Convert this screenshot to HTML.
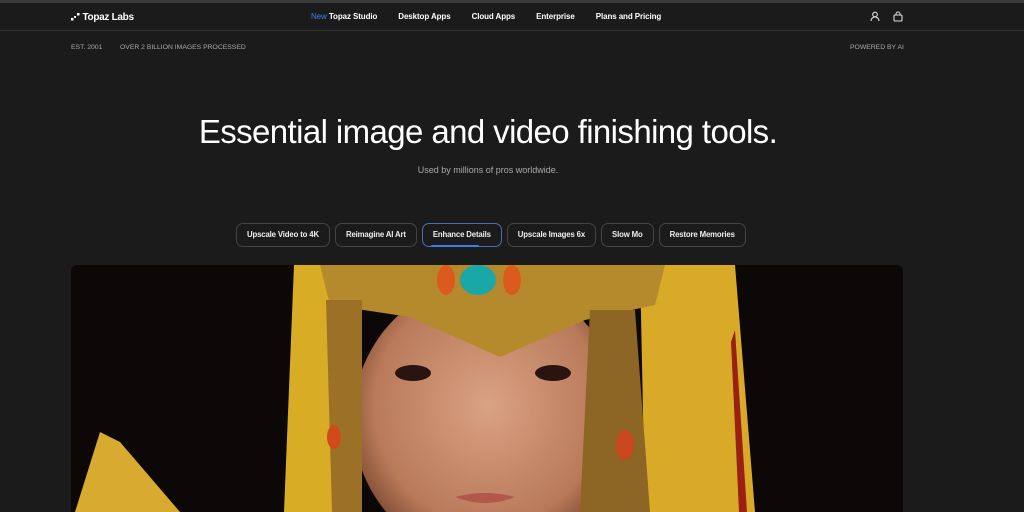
<!DOCTYPE html>
<html><head><meta charset="utf-8"><style>
*{margin:0;padding:0;box-sizing:border-box}
html,body{width:1024px;height:512px;overflow:hidden}
body{background:#1b1b1b;font-family:"Liberation Sans",sans-serif;color:#fff;position:relative}
.top{position:absolute;top:0;left:0;width:1024px;height:3px;background:#3a3a3a}
.nav{position:absolute;top:3px;left:0;width:1024px;height:28px;border-bottom:1px solid #333}
.logo{position:absolute;left:71px;top:9px;font-size:10px;font-weight:bold;letter-spacing:-.3px}
.links{position:absolute;left:311px;top:9px;font-size:8px;font-weight:bold;white-space:nowrap;letter-spacing:-.1px}
.links span{margin-right:21px}
.meta{position:absolute;top:44px;font-size:6.8px;color:#aaa}
h1{position:absolute;top:113px;left:0;width:976px;text-align:center;font-size:33px;font-weight:normal;letter-spacing:-.6px}
.sub{position:absolute;top:165px;left:0;width:976px;text-align:center;font-size:9px;color:#aaa}
.tabs{position:absolute;top:223px;left:236px;display:flex;gap:5px}
.tab{height:24px;border:1px solid #444;border-radius:7px;padding:0 10px;font-size:7.8px;font-weight:bold;line-height:22px;color:#eee;position:relative;letter-spacing:-.15px}
.tab.act{border-color:#4a6fb0}
.tab.act:after{content:"";position:absolute;left:8px;bottom:-1px;width:48px;height:2px;background:#3c7cf0;border-radius:1px}
.img{position:absolute;left:71px;top:265px;width:832px;height:247px;border-radius:6px 6px 0 0;overflow:hidden;background:#0c0807}
</style></head><body>
<div class="top"></div>
<div class="nav">
<div class="logo"><svg width="9" height="8" viewBox="0 0 9 8" style="vertical-align:-1px"><rect x="0" y="5" width="2.5" height="2.5" fill="#fff"/><rect x="3" y="3" width="2" height="2" fill="#fff"/><rect x="6" y="0" width="2.5" height="2.5" fill="#fff"/></svg> Topaz Labs</div>
<div class="links"><span><b style="color:#3b7ff0;font-weight:normal">New</b> Topaz Studio</span><span>Desktop Apps</span><span>Cloud Apps</span><span>Enterprise</span><span>Plans and Pricing</span></div>
<svg style="position:absolute;left:870px;top:8px" width="10" height="11" viewBox="0 0 10 11" fill="none" stroke="#ddd" stroke-width="1.1"><circle cx="5" cy="3.5" r="2.3"/><path d="M1 10c0-2.5 2-4 4-4s4 1.5 4 4"/></svg>
<svg style="position:absolute;left:893px;top:8px" width="10" height="11" viewBox="0 0 10 11" fill="none" stroke="#ddd" stroke-width="1.1"><rect x="1" y="4" width="8" height="6" rx="1"/><path d="M3 4V3a2 2 0 0 1 4 0v1"/></svg>
</div>
<div class="meta" style="left:71px">EST. 2001</div>
<div class="meta" style="left:120px">OVER 2 BILLION IMAGES PROCESSED</div>
<div class="meta" style="left:850px">POWERED BY AI</div>
<h1>Essential image and video finishing tools.</h1>
<div class="sub">Used by millions of pros worldwide.</div>
<div class="tabs">
<div class="tab">Upscale Video to 4K</div><div class="tab">Reimagine AI Art</div><div class="tab act">Enhance Details</div><div class="tab">Upscale Images 6x</div><div class="tab">Slow Mo</div><div class="tab">Restore Memories</div>
</div>
<div class="img"><svg width="832" height="247" viewBox="71 265 832 247">
<defs>
<radialGradient id="sk" cx=".5" cy=".45" r=".6"><stop offset="0" stop-color="#d9a383"/><stop offset=".7" stop-color="#b97a5a"/><stop offset="1" stop-color="#6b3a25"/></radialGradient>
</defs>
<path d="M294 265h60v247h-70z" fill="#d9ac25"/>
<path d="M640 265h95l20 247h-110z" fill="#d8aa28"/>
<path d="M735 330l12 182h-8l-8-170z" fill="#9a2014"/>
<ellipse cx="488" cy="420" rx="135" ry="140" fill="url(#sk)"/>
<path d="M320 265h345l-10 40-70 15-85 37-90-40-80-12z" fill="#b58a2d"/>
<ellipse cx="478" cy="280" rx="18" ry="15" fill="#1aa7a7"/>
<ellipse cx="446" cy="280" rx="9" ry="15" fill="#dd5a1e"/>
<ellipse cx="512" cy="280" rx="9" ry="15" fill="#dd5a1e"/>
<path d="M326 300h36v212h-30z" fill="#9b7128"/>
<path d="M590 310h45l15 202h-70z" fill="#8d6525"/>
<ellipse cx="334" cy="437" rx="7" ry="12" fill="#d04a1c"/>
<ellipse cx="625" cy="445" rx="9" ry="15" fill="#c9461e"/>
<ellipse cx="413" cy="373" rx="18" ry="8" fill="#2a1410"/>
<ellipse cx="553" cy="373" rx="18" ry="8" fill="#2a1410"/>
<path d="M455 497q30-8 60 0q-30 12-60 0z" fill="#b2574b"/>
<path d="M100 432l20 10 60 70h-105z" fill="#d8aa30"/>
</svg></div>
</body></html>
